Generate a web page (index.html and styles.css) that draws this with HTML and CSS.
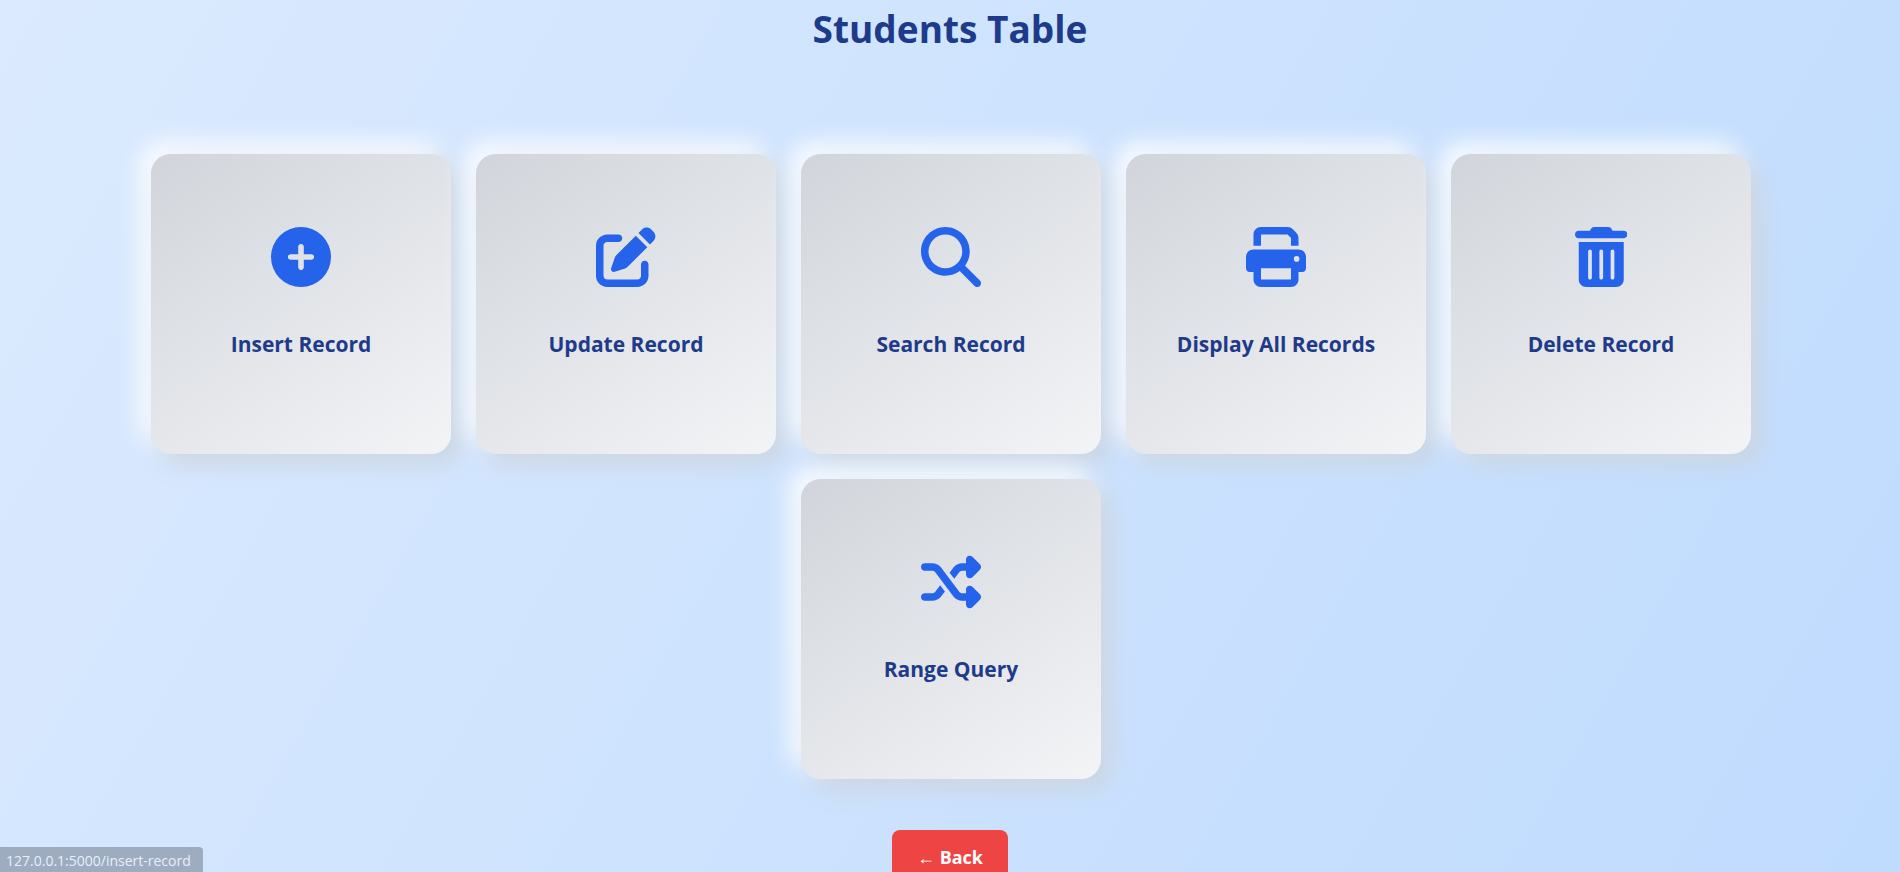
FILE: index.html
```html
<!DOCTYPE html>
<html lang="en">
<head>
<meta charset="utf-8">
<meta name="viewport" content="width=device-width, initial-scale=1">
<title>Students Table</title>
<link rel="stylesheet" href="styles.css">
</head>
<body>
<main class="page">
  <h1 class="title">Students Table</h1>
  <nav class="cards" aria-label="Record actions">
    <a class="card" href="#insert-record">
      <svg class="icon" viewBox="0 0 512 512" aria-hidden="true"><path d="M256 512A256 256 0 1 0 256 0a256 256 0 1 0 0 512zM232 344V280H168c-13.300 0-24-10.700-24-24s10.700-24 24-24h64V168c0-13.300 10.700-24 24-24s24 10.700 24 24v64h64c13.300 0 24 10.700 24 24s-10.700 24-24 24H280v64c0 13.300-10.700 24-24 24s-24-10.700-24-24z"/></svg>
      <span class="label">Insert Record</span>
    </a>
    <a class="card" href="#update-record">
      <svg class="icon" viewBox="0 0 512 512" aria-hidden="true"><path d="M471.600 21.700c-21.900-21.900-57.300-21.900-79.200 0L362.300 51.700l97.900 97.900 30.100-30.100c21.900-21.900 21.900-57.300 0-79.200L471.600 21.700zm-299.200 220c-6.100 6.100-10.800 13.600-13.500 21.900l-29.600 88.800c-2.900 8.600-.6 18.100 5.800 24.600s15.900 8.700 24.600 5.800l88.800-29.600c8.200-2.700 15.700-7.400 21.900-13.500L437.700 172.300 339.700 74.300 172.400 241.700zM96 64C43 64 0 107 0 160V416c0 53 43 96 96 96H352c53 0 96-43 96-96V320c0-17.700-14.300-32-32-32s-32 14.300-32 32v96c0 17.700-14.300 32-32 32H96c-17.700 0-32-14.300-32-32V160c0-17.700 14.300-32 32-32h96c17.700 0 32-14.300 32-32s-14.300-32-32-32H96z"/></svg>
      <span class="label">Update Record</span>
    </a>
    <a class="card" href="#search-record">
      <svg class="icon" viewBox="0 0 512 512" aria-hidden="true"><path d="M416 208c0 45.900-14.900 88.300-40 122.700L502.600 457.400c12.500 12.500 12.500 32.800 0 45.300s-32.800 12.500-45.300 0L330.700 376c-34.400 25.200-76.800 40-122.700 40C93.100 416 0 322.900 0 208S93.100 0 208 0S416 93.100 416 208zM208 352a144 144 0 1 0 0-288 144 144 0 1 0 0 288z"/></svg>
      <span class="label">Search Record</span>
    </a>
    <a class="card" href="#display-records">
      <svg class="icon" viewBox="0 0 512 512" aria-hidden="true"><path d="M128 0C92.700 0 64 28.700 64 64v96h64V64H354.700L384 93.300V160h64V93.300c0-17-6.700-33.300-18.700-45.300L400 18.700C388 6.700 371.700 0 354.700 0H128zM384 352v32 64H128V384 368 352H384zm64 32h32c17.700 0 32-14.300 32-32V256c0-35.300-28.700-64-64-64H64c-35.300 0-64 28.700-64 64v96c0 17.700 14.300 32 32 32H64v64c0 35.300 28.700 64 64 64H384c35.300 0 64-28.700 64-64V384zM432 248a24 24 0 1 1 0 48 24 24 0 1 1 0-48z"/></svg>
      <span class="label">Display All Records</span>
    </a>
    <a class="card" href="#delete-record">
      <svg class="icon" viewBox="0 0 448 512" aria-hidden="true"><path d="M135.200 17.700C140.600 6.800 151.700 0 163.800 0H284.200c12.100 0 23.200 6.800 28.600 17.700L320 32h96c17.700 0 32 14.300 32 32s-14.300 32-32 32H32C14.300 96 0 81.700 0 64S14.300 32 32 32h96l7.200-14.300zM32 128H416V448c0 35.300-28.700 64-64 64H96c-35.300 0-64-28.700-64-64V128zm96 64c-8.800 0-16 7.200-16 16V432c0 8.800 7.200 16 16 16s16-7.200 16-16V208c0-8.800-7.200-16-16-16zm96 0c-8.800 0-16 7.200-16 16V432c0 8.800 7.200 16 16 16s16-7.200 16-16V208c0-8.800-7.200-16-16-16zm96 0c-8.800 0-16 7.200-16 16V432c0 8.800 7.200 16 16 16s16-7.200 16-16V208c0-8.800-7.200-16-16-16z"/></svg>
      <span class="label">Delete Record</span>
    </a>
    <a class="card" href="#range-query">
      <svg class="icon" viewBox="0 0 512 512" aria-hidden="true"><path d="M403.800 34.400c12-5 25.700-2.200 34.900 6.900l64 64c6 6 9.400 14.100 9.400 22.600s-3.400 16.600-9.400 22.600l-64 64c-9.200 9.200-22.900 11.900-34.900 6.900s-19.800-16.600-19.800-29.600V160H352c-10.100 0-19.600 4.700-25.600 12.800L284 229.300 244 176l31.200-41.600C293.300 110.200 321.800 96 352 96h32V64c0-12.900 7.800-24.600 19.800-29.600zM164 282.700L204 336l-31.200 41.600C154.700 401.800 126.200 416 96 416H32c-17.700 0-32-14.300-32-32s14.300-32 32-32H96c10.100 0 19.600-4.700 25.600-12.800L164 282.700zm274.600 188c-9.200 9.200-22.900 11.900-34.900 6.900s-19.800-16.600-19.800-29.600V416H352c-30.200 0-58.700-14.200-76.800-38.400L121.600 172.800c-6-8.100-15.500-12.800-25.600-12.800H32c-17.700 0-32-14.300-32-32s14.300-32 32-32H96c30.200 0 58.700 14.200 76.800 38.400L326.400 339.200c6 8.100 15.500 12.800 25.600 12.800h32V320c0-12.900 7.800-24.600 19.800-29.600s25.700-2.200 34.900 6.900l64 64c6 6 9.400 14.100 9.400 22.600s-3.400 16.600-9.400 22.600l-64 64z"/></svg>
      <span class="label">Range Query</span>
    </a>
  </nav>
  <a class="back" href="#back">← Back</a>
</main>
<div class="status">127.0.0.1:5000/insert-record</div>
</body>
</html>
```

FILE: styles.css
```css
* {
  box-sizing: border-box;
}

html {
  scrollbar-width: none;
}

body {
  margin: 0;
  min-height: 100vh;
  background: linear-gradient(120deg, #dbeafe, #bfdbfe);
  color: #1e3a8a;
  font-family: "Segoe UI", "Open Sans", "Noto Sans", sans-serif;
}

.page {
  display: flex;
  flex-direction: column;
  align-items: center;
}

.title {
  margin: 0 0 96px;
  font-size: 37px;
  font-weight: 700;
  line-height: 58px;
}

.cards {
  display: flex;
  flex-wrap: wrap;
  justify-content: center;
  gap: 25px;
  max-width: 1650px;
  padding: 0 24px 0 26px;
}

.card {
  display: flex;
  flex-direction: column;
  align-items: center;
  justify-content: center;
  gap: 40px;
  width: 300px;
  height: 300px;
  padding-bottom: 20px;
  border-radius: 20px;
  background: linear-gradient(145deg, #d1d5db, #f3f4f6);
  box-shadow: 10px 10px 25px #cbd5e1, -10px -10px 25px #ffffff;
  color: inherit;
  text-decoration: none;
}

.icon {
  height: 60px;
  fill: #2563eb;
}

.label {
  font-size: 21px;
  font-weight: 700;
  line-height: 34px;
}

.back {
  margin-top: 51px;
  padding: 12px 25px;
  border-radius: 8px;
  background: #ef4444;
  color: #ffffff;
  font-size: 18px;
  font-weight: 700;
  line-height: 30px;
  text-decoration: none;
}

.status {
  position: fixed;
  bottom: 0;
  left: 0;
  padding: 2px 12px 0 6px;
  border-top-right-radius: 4px;
  background: #9eacbf;
  color: #e6effc;
  font-size: 14px;
  line-height: 23px;
}
```
